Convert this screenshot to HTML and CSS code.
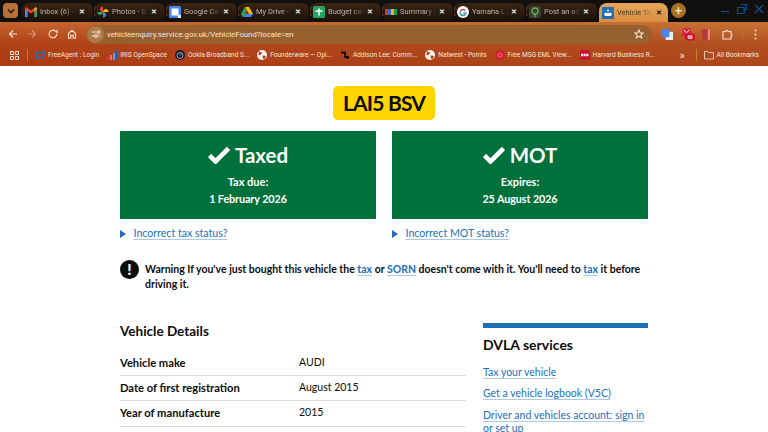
FILE: index.html
```html
<!DOCTYPE html>
<html lang="en">
<head>
    <meta charset="UTF-8">
    <meta name="viewport" content="width=device-width, initial-scale=1.0">
    <title>Vehicle Tax and MOT</title>
    <link rel="stylesheet" href="styles.css">
</head>
<body>
    <header class="browser">
        <div class="tabstrip">
            <div class="tab-menu"><svg width="8" height="6" viewBox="0 0 8 6"><path d="M1 1.500l3 3 3-3" fill="none" stroke="#2a160a" stroke-width="1.600"/></svg></div>
            <div class="tab">
                <svg class="favicon" viewBox="0 0 12 12"><path d="M0 2.500V11h2.500V5L6 7.600 9.500 5v6H12V2.500L10.600 1 6 4.500 1.400 1z" fill="#ea4335"/><path d="M0 3v8h2.500V5z" fill="#4285f4"/><path d="M12 3v8H9.500V5z" fill="#34a853"/><path d="M9.500 2.500V5L12 3.500 11 1z" fill="#fbbc04"/></svg>
                <span class="tab-title">Inbox (6) - l</span>
                <span class="tab-close">&#10005;</span>
            </div>
            <div class="tab">
                <svg class="favicon" viewBox="0 0 12 12"><path d="M6 6V0.500a3 3 0 0 0-3 3 3 3 0 0 0 3 2.500z" fill="#ea4335"/><path d="M6 6h5.500a3 3 0 0 0-3-3A3 3 0 0 0 6 6z" fill="#fbbc04"/><path d="M6 6v5.500a3 3 0 0 0 3-3A3 3 0 0 0 6 6z" fill="#4285f4"/><path d="M6 6H0.500a3 3 0 0 0 3 3A3 3 0 0 0 6 6z" fill="#34a853"/></svg>
                <span class="tab-title">Photos - G</span>
                <span class="tab-close">&#10005;</span>
            </div>
            <div class="tab">
                <svg class="favicon" viewBox="0 0 12 12"><rect width="12" height="12" rx="1.500" fill="#4285f4"/><rect x="2.500" y="2.500" width="7" height="7" fill="#fff"/><circle cx="10.500" cy="10.500" r="1.700" fill="#fff"/></svg>
                <span class="tab-title">Google Cal</span>
                <span class="tab-close">&#10005;</span>
            </div>
            <div class="tab">
                <svg class="favicon" viewBox="0 0 12 12"><path d="M4 1h4l4 7H8z" fill="#fbbc04"/><path d="M4 1l2 3.500L2 11 0 8z" fill="#34a853"/><path d="M2 11l2-3h8l-2 3z" fill="#4285f4"/><path d="M4 8l2-3.500L8 8z" fill="#ea4335" opacity=".5"/></svg>
                <span class="tab-title">My Drive -</span>
                <span class="tab-close">&#10005;</span>
            </div>
            <div class="tab">
                <svg class="favicon" viewBox="0 0 12 12"><rect width="12" height="12" rx="1.500" fill="#23a566"/><path d="M2.500 5h7M6 2.500v7" stroke="#fff" stroke-width="1.500"/></svg>
                <span class="tab-title">Budget cas</span>
                <span class="tab-close">&#10005;</span>
            </div>
            <div class="tab">
                <svg class="favicon" viewBox="0 0 12 12"><rect y="3" width="3" height="6" fill="#d93025"/><rect x="3" y="3" width="3" height="6" fill="#3367d6"/><rect x="6" y="3" width="3" height="6" fill="#f4b400"/><rect x="9" y="3" width="3" height="6" fill="#0f9d58"/></svg>
                <span class="tab-title">Summary |</span>
                <span class="tab-close">&#10005;</span>
            </div>
            <div class="tab">
                <svg class="favicon" viewBox="0 0 12 12"><circle cx="6" cy="6" r="6" fill="#fff"/><path d="M9.600 6.200H6.200v1.300h2a2.300 2.300 0 1 1-.6-2.500l.9-.9a3.600 3.600 0 1 0 1.100 2.100z" fill="#4285f4"/><path d="M2.800 4.300l1.100.8A2.300 2.300 0 0 1 7.600 5l.9-.9a3.600 3.600 0 0 0-5.700.2z" fill="#ea4335"/><path d="M2.800 7.800l1.100-.8a2.300 2.300 0 0 0 3.400.9l.9.9a3.600 3.600 0 0 1-5.400-1z" fill="#34a853"/></svg>
                <span class="tab-title">Yamaha L |</span>
                <span class="tab-close">&#10005;</span>
            </div>
            <div class="tab">
                <svg class="favicon" viewBox="0 0 12 12"><rect width="12" height="12" rx="2" fill="#3a3a36"/><circle cx="6" cy="5" r="3" fill="none" stroke="#6fb544" stroke-width="1.300"/><path d="M6 8v3" stroke="#6fb544" stroke-width="1.300"/></svg>
                <span class="tab-title">Post an ad</span>
                <span class="tab-close">&#10005;</span>
            </div>
            <div class="tab tab-active">
                <svg class="favicon" viewBox="0 0 12 12"><rect width="12" height="12" fill="#1d70b8"/><path d="M6 2l1 1.500L6 5 5 3.500zM2 6.500l2-1 2 .7 2-.7 2 1-1 2.500H3z" fill="#fff"/></svg>
                <span class="tab-title">Vehicle Ta</span>
                <span class="tab-close">&#10005;</span>
            </div>
            <div class="tab-new">+</div>
            <div class="window-controls">
                <svg width="10" height="10" viewBox="0 0 10 10"><path d="M1 7.500h8" stroke="#114f8c" stroke-width="1.200"/></svg>
                <svg width="10" height="10" viewBox="0 0 10 10"><path d="M3.500 0.500h6v5h-2M0.600 3.500h6.500v6H0.600z" fill="none" stroke="#114f8c" stroke-width="1.200"/></svg>
                <svg width="10" height="10" viewBox="0 0 10 10"><path d="M1 1l8 8M9 1l-8 8" stroke="#114f8c" stroke-width="1.200"/></svg>
            </div>
        </div>

        <div class="toolbar">
            <div class="nav-btn"><svg width="10" height="10" viewBox="0 0 10 10"><path d="M9 5H1.500M5 1.500L1.500 5 5 8.500" class="ico"/></svg></div>
            <div class="nav-btn nav-off"><svg width="10" height="10" viewBox="0 0 10 10"><path d="M1 5h7.500M5 1.500L8.500 5 5 8.500" class="ico"/></svg></div>
            <div class="nav-btn nav-gap"><svg width="10" height="10" viewBox="0 0 10 10"><path d="M8.700 5a3.800 3.800 0 1 1-1.100-2.700L9 3.500V0.800" class="ico"/></svg></div>
            <div class="nav-btn"><svg width="10" height="10" viewBox="0 0 10 10"><path d="M1.500 4.500L5 1.300l3.500 3.200v4.700H6.200V6.300H3.800v2.900H1.500z" class="ico"/></svg></div>
            <div class="omnibox">
                <div class="site-info"><svg width="10" height="10" viewBox="0 0 10 10"><path d="M0.800 3h4.500M7.500 7h1.700M0.800 7h2.700" class="ico"/><circle cx="7.500" cy="3" r="1.300" class="ico"/><circle cx="5" cy="7" r="1.300" class="ico"/></svg></div>
                <span class="url">vehicleenquiry.service.gov.uk/VehicleFound?locale=en</span>
                <svg class="star" width="10" height="10" viewBox="0 0 10 10"><path d="M5 1l1.200 2.700 2.900.3-2.200 1.900.7 2.900L5 7.300 2.400 8.800l.7-2.900L0.900 4l2.900-.3z" class="ico"/></svg>
            </div>
            <div class="extensions">
                <svg width="11" height="11" viewBox="0 0 12 12"><rect x="4" y="3" width="8" height="9" fill="#e8eef8"/><rect width="8" height="9" rx="1" fill="#4a85e8"/></svg>
                <svg class="ext-mail" width="13" height="13" viewBox="0 0 13 13"><rect x="0" y="0" width="9" height="9" rx="2" fill="#d9263a"/><path d="M1.500 2l3 2.500 3-2.500" fill="none" stroke="#f5e8e8"/><rect x="3" y="5.500" width="10" height="7" rx="2.500" fill="#c9102a"/><text x="8" y="11" class="ext-badge">60</text></svg>
                <svg class="ext-book" width="8" height="11" viewBox="0 0 9 12"><rect width="9" height="12" rx="1" fill="#b53a3a"/><rect x="6.500" y="0" width="2.500" height="12" fill="#e88"/></svg>
                <svg class="ext-puzzle" width="11" height="11" viewBox="0 0 11 11"><path d="M1 2.500h2.500a1.300 1.300 0 0 1 2.500 0H9V5a1.300 1.300 0 0 1 0 2.500V10H1z" class="ico"/></svg>
                <span class="ext-sep"></span>
                <svg width="3" height="11" viewBox="0 0 3 11"><circle cx="1.500" cy="1.500" r="1" fill="#f3e6d8"/><circle cx="1.500" cy="5.500" r="1" fill="#f3e6d8"/><circle cx="1.500" cy="9.500" r="1" fill="#f3e6d8"/></svg>
            </div>
        </div>

        <nav class="bookmarks">
            <svg class="apps" width="9" height="9" viewBox="0 0 9 9"><path d="M0.500 0.500h3v3h-3zM5.500 0.500h3v3h-3zM0.500 5.500h3v3h-3zM5.500 5.500h3v3h-3z" fill="none" stroke="#f3e6d8"/></svg>
            <span class="bar-sep bar-sep-apps"></span>
            <a class="bookmark"><svg viewBox="0 0 10 10"><path d="M0.500 2.500h9L8 8H2z" fill="none" stroke="#1f74c9" stroke-width="1.400"/></svg>FreeAgent : Login</a>
            <a class="bookmark"><svg viewBox="0 0 10 10"><rect x="0" y="7" width="2" height="3" fill="#e53935"/><rect x="3" y="5" width="2" height="5" fill="#ef6c8e"/><rect x="6" y="3" width="2" height="7" fill="#5c9ded"/><rect x="8.300" y="0" width="1.700" height="10" fill="#1f5fb8"/></svg>IRIS OpenSpace</a>
            <a class="bookmark"><svg viewBox="0 0 10 10"><circle cx="5" cy="5" r="5" fill="#141b2e"/><circle cx="5" cy="5.500" r="3" fill="none" stroke="#ccd" stroke-width=".8"/><path d="M5 5.500L6.500 3.500" stroke="#ccd" stroke-width=".8"/></svg>Ookla Broadband S...</a>
            <a class="bookmark"><svg viewBox="0 0 10 10"><circle cx="5" cy="5" r="5" fill="#f4f0ec"/><path d="M2 1.500l3 1-1 2-2.500 1zM6 5.500l3 .5-1.500 3-2-1z" fill="#a8401a"/></svg>Founderware &#8212; Opi...</a>
            <a class="bookmark"><svg viewBox="0 0 10 10"><path d="M1 2.500h4V7h3v2" fill="none" stroke="#111" stroke-width="1.800"/></svg>Addison Lee: Comm...</a>
            <a class="bookmark"><svg viewBox="0 0 10 10"><circle cx="5" cy="5" r="5" fill="#f4f0ec"/><path d="M2 1.500l3 1-1 2-2.500 1zM6 5.500l3 .5-1.500 3-2-1z" fill="#a8401a"/></svg>Natwest - Points</a>
            <a class="bookmark"><svg viewBox="0 0 10 10"><circle cx="5" cy="5" r="5" fill="#d3202e"/><circle cx="5" cy="5" r="2" fill="none" stroke="#f08a8a" stroke-width=".8"/></svg>Free MSG EML View...</a>
            <a class="bookmark"><svg viewBox="0 0 10 10"><rect width="10" height="10" rx="1" fill="#c8102e"/><path d="M1 5h8" stroke="#fff" stroke-width="2.500" stroke-dasharray="2 .6"/></svg>Harvard Business R...</a>
            <span class="bar-more">&raquo;</span>
            <span class="bar-sep bar-sep-all"></span>
            <a class="bookmark all-bookmarks"><svg viewBox="0 0 10 10"><path d="M0.500 1.500h3.200l1 1.200h4.800v6.300h-9z" fill="none" stroke="#f3e6d8" stroke-width=".8"/></svg>All Bookmarks</a>
        </nav>
    </header>

    <main class="page">
        <div class="plate-row"><div class="plate">LAI5 BSV</div></div>

        <div class="status-row">
            <div class="status-col">
                <div class="status-panel">
                    <h2 class="status-title"><svg class="tick" viewBox="0 0 22 18"><path d="M1.500 9.500l6 6L20.500 2.500" fill="none" stroke="#fff" stroke-width="4.600"/></svg>Taxed</h2>
                    <p class="status-label">Tax due:</p>
                    <p class="status-date">1 February 2026</p>
                </div>
                <div class="details-link"><span class="arrow"></span><a href="#">Incorrect tax status?</a></div>
            </div>
            <div class="status-col">
                <div class="status-panel">
                    <h2 class="status-title"><svg class="tick" viewBox="0 0 22 18"><path d="M1.500 9.500l6 6L20.500 2.500" fill="none" stroke="#fff" stroke-width="4.600"/></svg>MOT</h2>
                    <p class="status-label">Expires:</p>
                    <p class="status-date">25 August 2026</p>
                </div>
                <div class="details-link"><span class="arrow"></span><a href="#">Incorrect MOT status?</a></div>
            </div>
        </div>

        <div class="warning">
            <span class="warning-icon">!</span>
            <p>Warning If you've just bought this vehicle the <a href="#">tax</a> or <a href="#">SORN</a> doesn't come with it. You'll need to <a href="#">tax</a> it before driving it.</p>
        </div>

        <div class="lower">
            <section class="vehicle-details">
                <h2>Vehicle Details</h2>
                <div class="row"><span class="row-key">Vehicle make</span><span>AUDI</span></div>
                <div class="row"><span class="row-key">Date of first registration</span><span>August 2015</span></div>
                <div class="row"><span class="row-key">Year of manufacture</span><span>2015</span></div>
            </section>
            <aside class="services">
                <h2>DVLA services</h2>
                <a href="#">Tax your vehicle</a>
                <a href="#">Get a vehicle logbook (V5C)</a>
                <a href="#">Driver and vehicles account: sign in or set up</a>
            </aside>
        </div>
    </main>
</body>
</html>
```
FILE: styles.css
```css
html, body {
    margin: 0;
    padding: 0;
    height: 432px;
    overflow: hidden;
    background: #fff;
}
body {
    font-family: "Lato", "Noto Sans", sans-serif;
    color: #0b0c0c;
}
a {
    color: #1d70b8;
    text-decoration-color: #a9cbe8;
    text-underline-offset: 2px;
}
p, h2 {
    margin: 0;
}

/* browser chrome */
.browser {
    height: 66px;
    font-family: "Roboto", sans-serif;
    background:
        linear-gradient(90deg, rgba(190, 70, 30, .25), rgba(200, 140, 70, .2)),
        linear-gradient(180deg, #cf7a3a 0, #c56a2e 24px, #ab3f16 44px, #a63610 100%);
    color: #f3e6d8;
}
.tabstrip {
    height: 22px;
    display: flex;
    background: #12100e;
}
.tab-menu {
    width: 15px;
    height: 15px;
    margin: 3px 4px 0 3px;
    border-radius: 4px;
    background: #b8703a;
    display: flex;
    align-items: center;
    justify-content: center;
}
.tab {
    width: 72px;
    flex: none;
    box-sizing: border-box;
    height: 17px;
    margin-top: 3px;
    padding: 0 5px 0 3px;
    display: flex;
    align-items: center;
    font-size: 7.500px;
    color: #bdb3a8;
    position: relative;
    background: linear-gradient(180deg, #3a2412, #1c130c);
    border-radius: 7px;
    border-right: 1.500px solid #12100e;
}
.tab::after {
    content: "";
    width: 1.500px;
    height: 9px;
    background: #a86a3a;
    position: absolute;
    right: -2px;
    top: 4px;
}
.tab:nth-child(10)::after,
.tab:nth-child(9)::after {
    display: none;
}
.favicon {
    width: 12px;
    height: 12px;
    flex: none;
    margin: 0 3px 0 0;
}
.tab-title {
    flex: 1;
    white-space: nowrap;
    overflow: hidden;
    -webkit-mask-image: linear-gradient(90deg, #000 70%, transparent);
    mask-image: linear-gradient(90deg, #000 70%, transparent);
}
.tab-close {
    font-size: 7px;
    color: #f0ebe4;
    width: 12px;
    text-align: center;
    font-weight: 700;
}
.tab-active {
    width: 69px;
    height: 19px;
    border: 0;
    margin-left: 1px;
    padding-right: 3px;
    color: #4a3520;
    background: linear-gradient(180deg, #e5a659, #d98f44);
    border-radius: 8px 8px 0 0;
}
.tab-active .tab-close {
    color: #1a1206;
}
.tab-new {
    width: 15px;
    height: 15px;
    margin: 3px 0 0 3px;
    border-radius: 50%;
    background: #a96f22;
    color: #fff3dc;
    font-size: 13px;
    line-height: 15px;
    text-align: center;
}
.window-controls {
    margin-left: auto;
    padding: 4px 4px 0 0;
    display: flex;
    gap: 7px;
    height: 10px;
}
.toolbar {
    height: 22px;
    box-sizing: border-box;
    padding: 2px 0 0 3px;
    display: flex;
    align-items: center;
}
.ico {
    fill: none;
    stroke: #f3e6d8;
    stroke-width: 1.100;
}
.nav-btn {
    width: 19px;
    display: flex;
    justify-content: center;
}
.nav-off {
    opacity: .45;
}
.nav-gap {
    margin-left: 2px;
}
.omnibox {
    width: 566px;
    height: 19px;
    margin-left: 5px;
    border-radius: 10px;
    background: #96602f;
    display: flex;
    align-items: center;
    font-size: 7.750px;
}
.site-info {
    width: 17px;
    height: 17px;
    margin: 0 3px 0 1px;
    border-radius: 50%;
    background: #b07a48;
    display: flex;
    align-items: center;
    justify-content: center;
}
.url {
    flex: 1;
}
.star {
    margin-right: 8px;
}
.extensions {
    flex: 1;
    display: flex;
    align-items: center;
    gap: 9px;
    padding-left: 10px;
}
.ext-badge {
    font-size: 4.500px;
    font-weight: 700;
    fill: #fff;
    text-anchor: middle;
}
.ext-book {
    margin-left: -2px;
}
.ext-puzzle {
    margin-left: 3px;
}
.ext-sep {
    width: 1px;
    height: 10px;
    background: #b27a30;
    margin-right: 2px;
}
.bookmarks {
    height: 22px;
    display: flex;
    align-items: center;
    padding: 0 9px 0 10px;
    font-size: 6.600px;
    white-space: nowrap;
}
.apps {
    flex: none;
}
.bookmark {
    display: flex;
    align-items: center;
    gap: 3px;
    margin-right: 8px;
    color: inherit;
}
.bookmark svg {
    flex: none;
    width: 10px;
    height: 10px;
}
.bar-sep {
    flex: none;
    width: 1px;
    height: 12px;
    background: #c0802f;
    margin: 0 7px 0 8px;
}
.bar-more {
    font-size: 11px;
    margin-left: auto;
    margin-right: 3px;
}
.all-bookmarks {
    margin: 0;
}

/* page */
.page {
    width: 528px;
    margin: 0 auto;
    padding-top: 20px;
    font-size: 11.200px;
    font-weight: 400;
}
.plate-row {
    display: flex;
    justify-content: center;
}
.plate {
    width: 102px;
    height: 34px;
    background: #ffd500;
    border-radius: 5px;
    text-align: center;
    white-space: nowrap;
    font-size: 21px;
    line-height: 34px;
    font-weight: 700;
    letter-spacing: -0.800px;
}
.status-row {
    display: grid;
    grid-template-columns: 256px 256px;
    gap: 16px;
    margin-top: 11px;
}
.status-panel {
    height: 88px;
    background: #00703c;
    color: #fff;
    text-align: center;
    padding-top: 11px;
    box-sizing: border-box;
}
.status-title {
    font-size: 20.500px;
    line-height: 26px;
    font-weight: 700;
    display: flex;
    justify-content: center;
    align-items: center;
    gap: 5px;
}
.tick {
    width: 22px;
    height: 18px;
}
.status-label {
    margin-top: 5px;
    line-height: 17px;
    font-size: 11px;
    font-weight: 700;
}
.status-date {
    line-height: 17px;
    font-size: 10.800px;
    letter-spacing: -0.100px;
    font-weight: 700;
}
.details-link {
    display: flex;
    align-items: center;
    margin-top: 7px;
    line-height: 15px;
    font-size: 10.600px;
}
.arrow {
    width: 0;
    height: 0;
    border-left: 6.500px solid #1d70b8;
    border-top: 4px solid transparent;
    border-bottom: 4px solid transparent;
    margin-right: 7.500px;
}
.warning {
    display: flex;
    gap: 6px;
    margin-top: 19px;
    font-size: 10.500px;
    font-weight: 700;
    line-height: 15px;
}
.warning-icon {
    width: 19px;
    height: 19px;
    flex: none;
    border-radius: 50%;
    background: #0b0c0c;
    color: #fff;
    font-size: 15px;
    line-height: 19px;
    font-weight: 900;
    text-align: center;
}
.warning p {
    margin-top: 2px;
}
.lower {
    display: grid;
    grid-template-columns: 346px 165px;
    gap: 17px;
    margin-top: 31px;
}
.vehicle-details h2 {
    font-size: 13.500px;
    line-height: 16px;
    font-weight: 700;
    margin-bottom: 12px;
}
.row {
    height: 25.200px;
    display: grid;
    grid-template-columns: 179px 1fr;
    align-items: center;
    border-bottom: 1px solid #d8dadb;
    box-sizing: border-box;
    padding-bottom: 2px;
    font-size: 10.500px;
}
.row-key {
    font-size: 11.200px;
    font-weight: 700;
}
.services {
    border-top: 5px solid #1d70b8;
    display: flex;
    flex-direction: column;
    align-items: flex-start;
    font-size: 10.500px;
}
.services h2 {
    font-size: 14px;
    line-height: 20px;
    font-weight: 700;
    margin: 7px 0 10.500px;
}
.services a {
    line-height: 13.500px;
    margin-bottom: 8px;
}
```
